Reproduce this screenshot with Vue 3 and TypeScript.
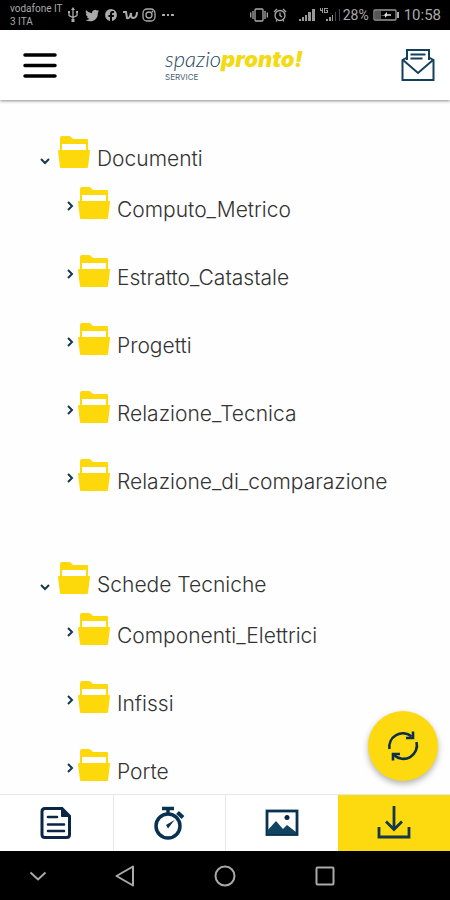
<script setup lang="ts">
import { ref } from 'vue'

interface Folder {
  name: string
  open: boolean
  children: string[]
}

const folders = ref<Folder[]>([
  {
    name: 'Documenti',
    open: true,
    children: ['Computo_Metrico', 'Estratto_Catastale', 'Progetti', 'Relazione_Tecnica', 'Relazione_di_comparazione'],
  },
  { name: 'Schede Tecniche', open: true, children: ['Componenti_Elettrici', 'Infissi', 'Porte'] },
])

const tabs = ['Documenti', 'Tempi', 'Immagini', 'Download'] as const
const activeTab = ref<string>('Download')
</script>

<template>
  <div class="screen">
    <div class="status">
      <div class="carrier">vodafone IT<br />3 ITA</div>
      <svg class="status-left" width="108" height="16" viewBox="0 0 108 16" aria-hidden="true">
        <g fill="none" stroke="#aaa" stroke-width="1.3">
          <path d="M5 2v11M1 5v3.500l4 2 4-2V5" />
          <circle cx="81" cy="8" r="3" />
          <rect x="75" y="2" width="12" height="12" rx="4" />
          <path d="M55 5h3l1 6q3 1 4-5 0 5 2 5 4 0 4-6" stroke-width="2" />
        </g>
        <g fill="#aaa">
          <path d="M5 0l2 3H3zM3.500 12h3v3h-3zM0 4h2v2H0zM8 4h2v2H8z" />
          <path d="M31 4.100l-1.500.5q1-.7 1.200-1.600l-1.700.6a3 3 0 0 0-5 2.600q-3.500-.2-5.800-3-1.300 2.300.8 3.900l-1.200-.3q0 2.200 2.200 2.900h-1.200q.7 1.800 2.700 2-1.800 1.400-4.100 1.200 3.500 2.100 7.300 1Q30 12 29.900 5.700z" />
          <path d="M43 2a6 6 0 0 0-1 11.900V10h-1.500V8H42V6.500q.1-2.500 2.700-2.400h1.200V6H45q-1-.1-1 1v1h2l-.3 2H44v3.900A6 6 0 0 0 43 2z" />
          <circle cx="84.500" cy="4.500" r="1" />
          <path d="M94 7h3v2h-3zM99 7h2v2h-2zM103 7h3v2h-3z" />
        </g>
      </svg>
      <div class="status-right">
        <svg width="93" height="16" viewBox="0 0 93 16" aria-hidden="true">
          <g fill="none" stroke="#aaa" stroke-width="1.300">
            <rect x="5" y="2" width="8" height="12" rx="1" />
            <path d="M3 4v8M.7 5.500v5M15 4v8M17.300 5.500v5" />
            <circle cx="30" cy="8.500" r="5" />
            <path d="M30 5.500v3l2 1.500M24 5l3-3M36 5l-3-3M27 13l-1 1.500M33 13l1 1.500" />
          </g>
          <g fill="#999">
            <path d="M49 12h2v2h-2zM52 10h2v4h-2zM55 8h2v6h-2zM58 5h3v9h-3zM62 2h3v12h-3z" />
            <path d="M76 12h2v2h-2zM79 10h2v4h-2zM82 8h1v6h-1z" />
            <path d="M85 5h1v9h-1zM89 2h1v12h-1z" fill="#444" />
            <path d="M70 1h1v2h1V1h1v5h-1V4h-2zM74 1h4v1h-3v3h2V4h-1V3h2v3h-4z" />
          </g>
        </svg>
        <span class="percent">28%</span>
        <svg width="27" height="14" viewBox="0 0 27 14" aria-hidden="true">
          <rect x="1" y="2" width="22" height="10" rx="1" fill="none" stroke="#999" stroke-width="1.300" />
          <path d="M2 3h6v8H2z" fill="#555" />
          <path d="M24 4h2v6h-2z" fill="#aaa" />
          <path d="M7 7h4l3-3v2.300h4v1.400h-4l-2 2V7.700z" fill="#ddd" />
        </svg>
        <span class="clock">10:58</span>
      </div>
    </div>

    <header class="topbar">
      <button class="icon-button" type="button" aria-label="Menu">
        <svg width="34" height="28" viewBox="0 0 34 28">
          <path d="M2 4h30M2 14.500h30M2 25h30" stroke="#000" stroke-width="3.500" stroke-linecap="round" />
        </svg>
      </button>
      <div class="logo">
        <div class="brand"><span class="spazio">spazio</span><span class="pronto">pronto!</span></div>
        <div class="service">SERVICE</div>
      </div>
      <button class="icon-button" type="button" aria-label="Messaggi">
        <svg width="34" height="34" viewBox="0 0 34 34" fill="none" stroke="#15405b" stroke-width="2">
          <path d="M6 12V2h22v10" />
          <path d="M6 9.500L1.500 12v20h31V12L28 9.500" />
          <path d="M2 12l15 13 15-13" />
          <path d="M9.500 6.500h15M9.500 10.500h12" />
        </svg>
      </button>
    </header>

    <main class="content">
      <ul class="tree">
        <li v-for="folder in folders" :key="folder.name">
          <button class="row" type="button" :aria-expanded="folder.open" @click="folder.open = !folder.open">
            <svg class="chevron" width="12" height="12" viewBox="0 0 12 12">
              <path :d="folder.open ? 'M2 4l4 4 4-4' : 'M4 2l4 4-4 4'" />
            </svg>
            <svg class="folder" width="32" height="32" viewBox="0 0 32 32">
              <path d="M2 14V2q0-2 2-2h7q1 0 2 1l2 2h14q1 0 1 1v10h-2V8H4v6z" />
              <path d="M1 14h30q1 0 1 1l-2 16q0 1-1 1H3q-1 0-1-1L0 15q0-1 1-1z" />
            </svg>
            <span class="label">{{ folder.name }}</span>
          </button>
          <ul v-if="folder.open" class="children">
            <li v-for="child in folder.children" :key="child">
              <button class="row" type="button">
                <svg class="chevron side" width="10" height="12" viewBox="0 0 10 12">
                  <path d="M2 2l4 4-4 4" />
                </svg>
                <svg class="folder" width="32" height="32" viewBox="0 0 32 32">
                  <path d="M2 14V2q0-2 2-2h7q1 0 2 1l2 2h14q1 0 1 1v10h-2V8H4v6z" />
                  <path d="M1 14h30q1 0 1 1l-2 16q0 1-1 1H3q-1 0-1-1L0 15q0-1 1-1z" />
                </svg>
                <span class="label">{{ child }}</span>
              </button>
            </li>
          </ul>
        </li>
      </ul>
    </main>

    <div class="footer">
      <button class="refresh" type="button" aria-label="Aggiorna">
        <svg width="32" height="34" viewBox="0 0 32 34" fill="none" stroke="#0d3047" stroke-width="2.600">
          <path d="M2.500 20A13.500 13.500 0 0 1 24.500 7.500" />
          <path d="M26 2.500V9h-7" />
          <path d="M29.500 13A13.500 13.500 0 0 1 7 26" />
          <path d="M6 31.500V25h7" />
        </svg>
      </button>
      <nav class="tabs">
        <button
          v-for="tab in tabs"
          :key="tab"
          class="tab"
          :class="{ active: tab === activeTab }"
          type="button"
          :aria-label="tab"
          @click="activeTab = tab"
        >
          <svg v-if="tab === 'Documenti'" width="32" height="34" viewBox="0 0 32 34" fill="none" stroke="#0b2545" stroke-width="3">
            <path d="M5 2.500h17l7.500 7.500v18.500q0 3-3 3H5q-3 0-3-3v-23q0-3 3-3z" />
            <path d="M21.500 2.500v8h8z" fill="#0b2545" stroke-width="1" />
            <path d="M8 11h9M8 18.500h16M8 25h16" stroke-linecap="round" stroke-width="2.600" />
          </svg>
          <svg v-else-if="tab === 'Tempi'" width="32" height="34" viewBox="0 0 32 34" fill="none" stroke="#0b3150" stroke-width="3.500">
            <circle cx="15" cy="20" r="12" />
            <path d="M9 2.500h12M15 4v5" />
            <path d="M24.500 6.500l5.500 5" stroke-width="4" />
            <path d="M21.500 14L13 19l2 3.500z" fill="#0b3150" stroke="none" />
          </svg>
          <svg v-else-if="tab === 'Immagini'" width="34" height="28" viewBox="0 0 34 28">
            <rect x="2" y="2" width="30" height="23.500" fill="none" stroke="#0b3150" stroke-width="2.800" />
            <circle cx="22" cy="8.500" r="2.500" fill="#0b2545" />
            <path d="M2 25v-3l9-10 7 8 4-4 9 7v2z" fill="#0f4560" />
          </svg>
          <svg v-else width="34" height="34" viewBox="0 0 34 34" fill="none" stroke="#12384a" stroke-width="2.800">
            <path d="M2 21v10h30V21" />
            <path d="M17 0v23M9 15.500l8 8 8-8" />
          </svg>
        </button>
      </nav>
    </div>

    <div class="system">
      <button type="button" aria-label="Nascondi">
        <svg width="20" height="20" viewBox="0 0 20 20"><path d="M2.500 6.500l7.500 7 7.500-7" /></svg>
      </button>
      <button type="button" aria-label="Indietro">
        <svg width="22" height="22" viewBox="0 0 22 22"><path d="M19 1.500v19L2.500 11z" stroke-linejoin="round" /></svg>
      </button>
      <button type="button" aria-label="Home">
        <svg width="22" height="22" viewBox="0 0 22 22"><circle cx="11" cy="11" r="9.500" /></svg>
      </button>
      <button type="button" aria-label="Recenti">
        <svg width="22" height="22" viewBox="0 0 22 22"><rect x="2.500" y="2.500" width="17" height="17" rx="1" /></svg>
      </button>
    </div>
  </div>
</template>

<style>
body {
  margin: 0;
  background: #fff;
}
</style>

<style scoped>
.screen {
  display: flex;
  flex-direction: column;
  height: 100vh;
  overflow: hidden;
  background: #fefefe;
  font-family: Inter, 'Liberation Sans', sans-serif;
}

button {
  display: flex;
  align-items: center;
  justify-content: center;
  margin: 0;
  padding: 0;
  border: 0;
  background: none;
  color: inherit;
  font: inherit;
  cursor: pointer;
}

svg {
  display: block;
  flex: none;
}

ul {
  margin: 0;
  padding: 0;
  list-style: none;
}

.status {
  display: flex;
  flex: none;
  align-items: center;
  height: 30px;
  padding: 0 9px 0 10px;
  background: #000;
  color: #aaa;
  font-family: Roboto, sans-serif;
}

.carrier {
  width: 58px;
  font-size: 10px;
  line-height: 13px;
  white-space: nowrap;
}

.status-right {
  display: flex;
  align-items: center;
  margin-left: auto;
}

.percent {
  margin-right: 4px;
  font-size: 14px;
}

.clock {
  margin-left: 4px;
  font-size: 15px;
}

.topbar {
  display: flex;
  flex: none;
  align-items: center;
  justify-content: space-between;
  height: 70px;
  padding: 0 15px 0 23px;
  background: #fff;
  box-shadow: 0 1px 3px rgba(0, 0, 0, 0.45);
}

.logo {
  display: grid;
  gap: 4px;
  padding-left: 10px;
}

.brand {
  font-size: 22px;
  font-style: italic;
  line-height: 20px;
}

.spazio {
  color: #23455e;
  font-family: Lato, sans-serif;
  font-weight: 300;
}

.pronto {
  color: #f2da14;
  font-family: Inter, sans-serif;
  font-weight: 900;
}

.service {
  color: #48626f;
  font-size: 8px;
  line-height: 8px;
}

.content {
  flex: 1;
  min-height: 0;
  padding: 36px 16px 0 39px;
  overflow: hidden;
}

.tree {
  display: grid;
  gap: 68px;
}

.children {
  display: grid;
  gap: 33px;
  padding: 16px 0 0 27px;
}

.row {
  align-items: flex-end;
  justify-content: flex-start;
  width: 100%;
  height: 35px;
  text-align: left;
}

.chevron {
  margin: 0 7px 4px 0;
  fill: none;
  stroke: #16384d;
  stroke-width: 2;
}

.side {
  margin: 0 2px 10px 0;
}

.folder {
  align-self: flex-start;
  margin-right: 7px;
  fill: #fdd80b;
}

.label {
  color: #333;
  font-size: 21px;
  font-weight: 300;
  line-height: 24px;
  white-space: nowrap;
}

.footer {
  position: relative;
  flex: none;
}

.refresh {
  position: absolute;
  right: 12px;
  bottom: 70px;
  width: 70px;
  height: 70px;
  border-radius: 50%;
  background: #fdd910;
  box-shadow: 0 3px 6px rgba(0, 0, 0, 0.3);
}

.tabs {
  display: grid;
  grid-template-columns: repeat(4, 1fr);
  height: 57px;
  border-top: 1px solid #e8e8e8;
  box-sizing: border-box;
  background: #fff;
}

.tab + .tab {
  border-left: 1px solid #e8e8e8;
}

.tab.active {
  border-color: #fdd910;
  background: #fdd910;
}

.system {
  display: grid;
  flex: none;
  grid-template-columns: 3fr 4fr 4fr 4fr 3fr;
  height: 49px;
  background: #000;
}

.system svg {
  fill: none;
  stroke: #aaa;
  stroke-width: 2;
}
</style>
